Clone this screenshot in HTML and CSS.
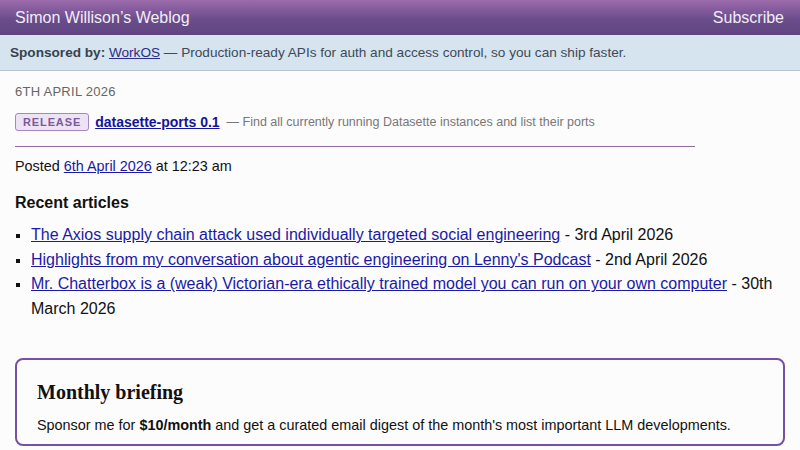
FILE: index.html
```html
<!DOCTYPE html>
<html lang="en">
<head>
<meta charset="utf-8">
<title>datasette-ports 0.1 - Simon Willison's Weblog</title>
<link rel="stylesheet" href="styles.css">
</head>
<body>
<header class="smallhead">
  <a class="site-title" href="#">Simon Willison’s Weblog</a>
  <a class="subscribe" href="#">Subscribe</a>
</header>
<div class="sponsor">
  <p><strong>Sponsored by:</strong> <a href="#">WorkOS</a> — Production-ready APIs for auth and access control, so you can ship faster.</p>
</div>
<main class="content">
  <div class="date">6th April 2026</div>
  <div class="release-row">
    <span class="badge">Release</span>
    <a class="release-link" href="#">datasette-ports 0.1</a>
    <span class="release-desc">— Find all currently running Datasette instances and list their ports</span>
  </div>
  <hr class="rule">
  <p class="posted">Posted <a href="#">6th April 2026</a> at 12:23 am</p>
  <h3 class="recent-title">Recent articles</h3>
  <ul class="recent">
    <li><a href="#">The Axios supply chain attack used individually targeted social engineering</a> - 3rd April 2026</li>
    <li><a href="#">Highlights from my conversation about agentic engineering on Lenny's Podcast</a> - 2nd April 2026</li>
    <li><a href="#">Mr. Chatterbox is a (weak) Victorian-era ethically trained model you can run on your own computer</a> - 30th March 2026</li>
  </ul>
  <section class="briefing">
    <h2>Monthly briefing</h2>
    <p>Sponsor me for <strong>$10/month</strong> and get a curated email digest of the month's most important LLM developments.</p>
  </section>
</main>
</body>
</html>
```

FILE: styles.css
```css
html, body {
  margin: 0;
  padding: 0;
}
body {
  background: #fdfcfd;
  font-family: "Liberation Sans", Arial, Helvetica, sans-serif;
  color: #111;
}
a {
  color: #1a1aa6;
}
.smallhead {
  height: 35px;
  box-sizing: border-box;
  padding: 0 16px 0 15px;
  display: flex;
  align-items: center;
  justify-content: space-between;
  background: linear-gradient(to bottom, #9c6bac 0%, #6a4d8c 55%, #5f4580 100%);
}
.smallhead a {
  color: #f3ecf7;
  text-decoration: none;
  font-size: 16px;
}
.sponsor {
  height: 36px;
  box-sizing: border-box;
  background: #d6e4f0;
  border-bottom: 1px solid #b7c3cf;
  padding: 0 10px;
  display: flex;
  align-items: center;
  font-size: 13.6px;
  color: #3d4a57;
}
.sponsor p {
  margin: 0;
}
.sponsor strong {
  color: #36424f;
}
.sponsor a {
  color: #2a2d8a;
}
.content {
  padding: 13px 15px 0 15px;
}
.date {
  font-size: 13px;
  text-transform: uppercase;
  letter-spacing: 0.02em;
  color: #666;
  line-height: 15px;
}
.release-row {
  display: flex;
  align-items: center;
  margin-top: 12px;
  height: 21px;
}
.badge {
  box-sizing: border-box;
  height: 18px;
  display: inline-flex;
  align-items: center;
  padding: 0 7px;
  background: #eee3f5;
  border: 1px solid #a588c0;
  border-radius: 3px;
  color: #7a5a9c;
  font-size: 11px;
  font-weight: bold;
  text-transform: uppercase;
  letter-spacing: 0.08em;
}
.release-link {
  margin-left: 6px;
  font-size: 14px;
  font-weight: bold;
  color: #14149a;
}
.release-desc {
  margin-left: 7px;
  font-size: 12.5px;
  color: #777;
}
.rule {
  width: 680px;
  margin: 14px 0 0 0;
  border: 0;
  border-top: 1px solid #8e6c9f;
  height: 0;
}
.posted {
  font-size: 14.4px;
  margin: 11px 0 0 0;
  line-height: 17px;
}
.recent-title {
  font-size: 16px;
  margin: 18px 0 0 0;
  line-height: 19px;
}
.recent {
  list-style: square;
  padding-left: 16px;
  margin: 11px 0 0 0;
  font-size: 16px;
  line-height: 24.7px;
}
.recent li::marker {
  font-size: 13px;
}
.briefing {
  margin-top: 36px;
  border: 2px solid #7650a3;
  border-radius: 8px;
  padding: 20px 20px 10px 20px;
}
.briefing h2 {
  font-family: "Liberation Serif", "Times New Roman", serif;
  font-size: 20px;
  margin: 0;
  line-height: 24px;
}
.briefing p {
  font-size: 14.4px;
  margin: 13px 0 0 0;
  line-height: 17px;
}
```
